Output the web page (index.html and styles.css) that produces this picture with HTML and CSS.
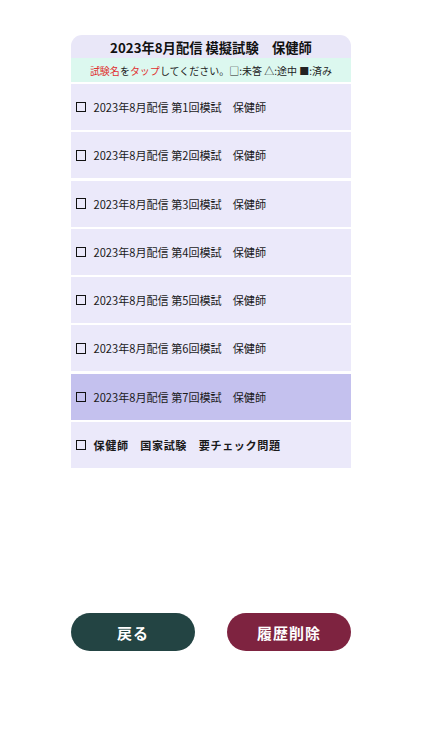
FILE: index.html
```html
<!DOCTYPE html>
<html lang="ja">
<head>
<meta charset="utf-8">
<link rel="stylesheet" href="styles.css">
</head>
<body>
<div class="page">
  <div class="panel">
    <div class="title">2023年8月配信 模擬試験　保健師</div>
    <div class="notice"><span class="red">試験名</span>を<span class="red">タップ</span>してください。□:未答 △:途中 ■:済み</div>
    <div class="list">
      <div class="row"><span class="box"></span><span class="label">2023年8月配信 第1回模試　保健師</span></div>
      <div class="row"><span class="box"></span><span class="label">2023年8月配信 第2回模試　保健師</span></div>
      <div class="row"><span class="box"></span><span class="label">2023年8月配信 第3回模試　保健師</span></div>
      <div class="row"><span class="box"></span><span class="label">2023年8月配信 第4回模試　保健師</span></div>
      <div class="row"><span class="box"></span><span class="label">2023年8月配信 第5回模試　保健師</span></div>
      <div class="row"><span class="box"></span><span class="label">2023年8月配信 第6回模試　保健師</span></div>
      <div class="row active"><span class="box"></span><span class="label">2023年8月配信 第7回模試　保健師</span></div>
      <div class="row"><span class="box"></span><span class="label bold">保健師　国家試験　要チェック問題</span></div>
    </div>
  </div>
  <div class="buttons">
    <button class="btn back">戻る</button>
    <button class="btn clear">履歴削除</button>
  </div>
</div>
</body>
</html>
```
FILE: styles.css
```css
html, body {
  margin: 0;
  padding: 0;
  background: #ffffff;
  font-family: "Noto Sans CJK JP", "Noto Sans", sans-serif;
  color: #1a1a1a;
}
.page {
  width: 280px;
  margin: 0 auto;
  padding-top: 35px;
}
.panel {
  display: flex;
  flex-direction: column;
}
.title {
  height: 23px;
  padding-top: 1px;
  box-sizing: border-box;
  background: #e9e7f8;
  border-radius: 11px 11px 0 0;
  display: flex;
  align-items: center;
  justify-content: center;
  font-size: 13.3px;
  font-weight: 700;
  color: #111;
}
.notice {
  height: 24px;
  background: #dcf8ef;
  display: flex;
  align-items: center;
  justify-content: center;
  font-size: 10px;
  color: #222;
  white-space: nowrap;
}
.red { color: #e0302f; }
.list {
  display: flex;
  flex-direction: column;
  gap: 2.3px;
  margin-top: 2px;
}
.row {
  height: 46px;
  background: #ebe9fa;
  display: flex;
  align-items: center;
  padding-left: 4.5px;
}
.row.active { background: #c4c1ee; }
.box {
  width: 8.5px;
  height: 8.5px;
  border: 1.3px solid #111;
  flex: none;
}
.label {
  margin-left: 7.5px;
  font-size: 11.1px;
  color: #1a1a1a;
  white-space: nowrap;
}
.label.bold {
  font-weight: 700;
  letter-spacing: 0.6px;
}
.buttons {
  display: flex;
  justify-content: space-between;
  margin-top: 145px;
}
.btn {
  width: 124px;
  height: 38px;
  border: none;
  border-radius: 19px;
  color: #ffffff;
  font-family: "Noto Sans CJK JP", "Noto Sans", sans-serif;
  font-size: 15px;
  font-weight: 700;
  letter-spacing: 1px;
  padding: 0;
}
.back { background: #234443; }
.clear { background: #7e2340; }
```
